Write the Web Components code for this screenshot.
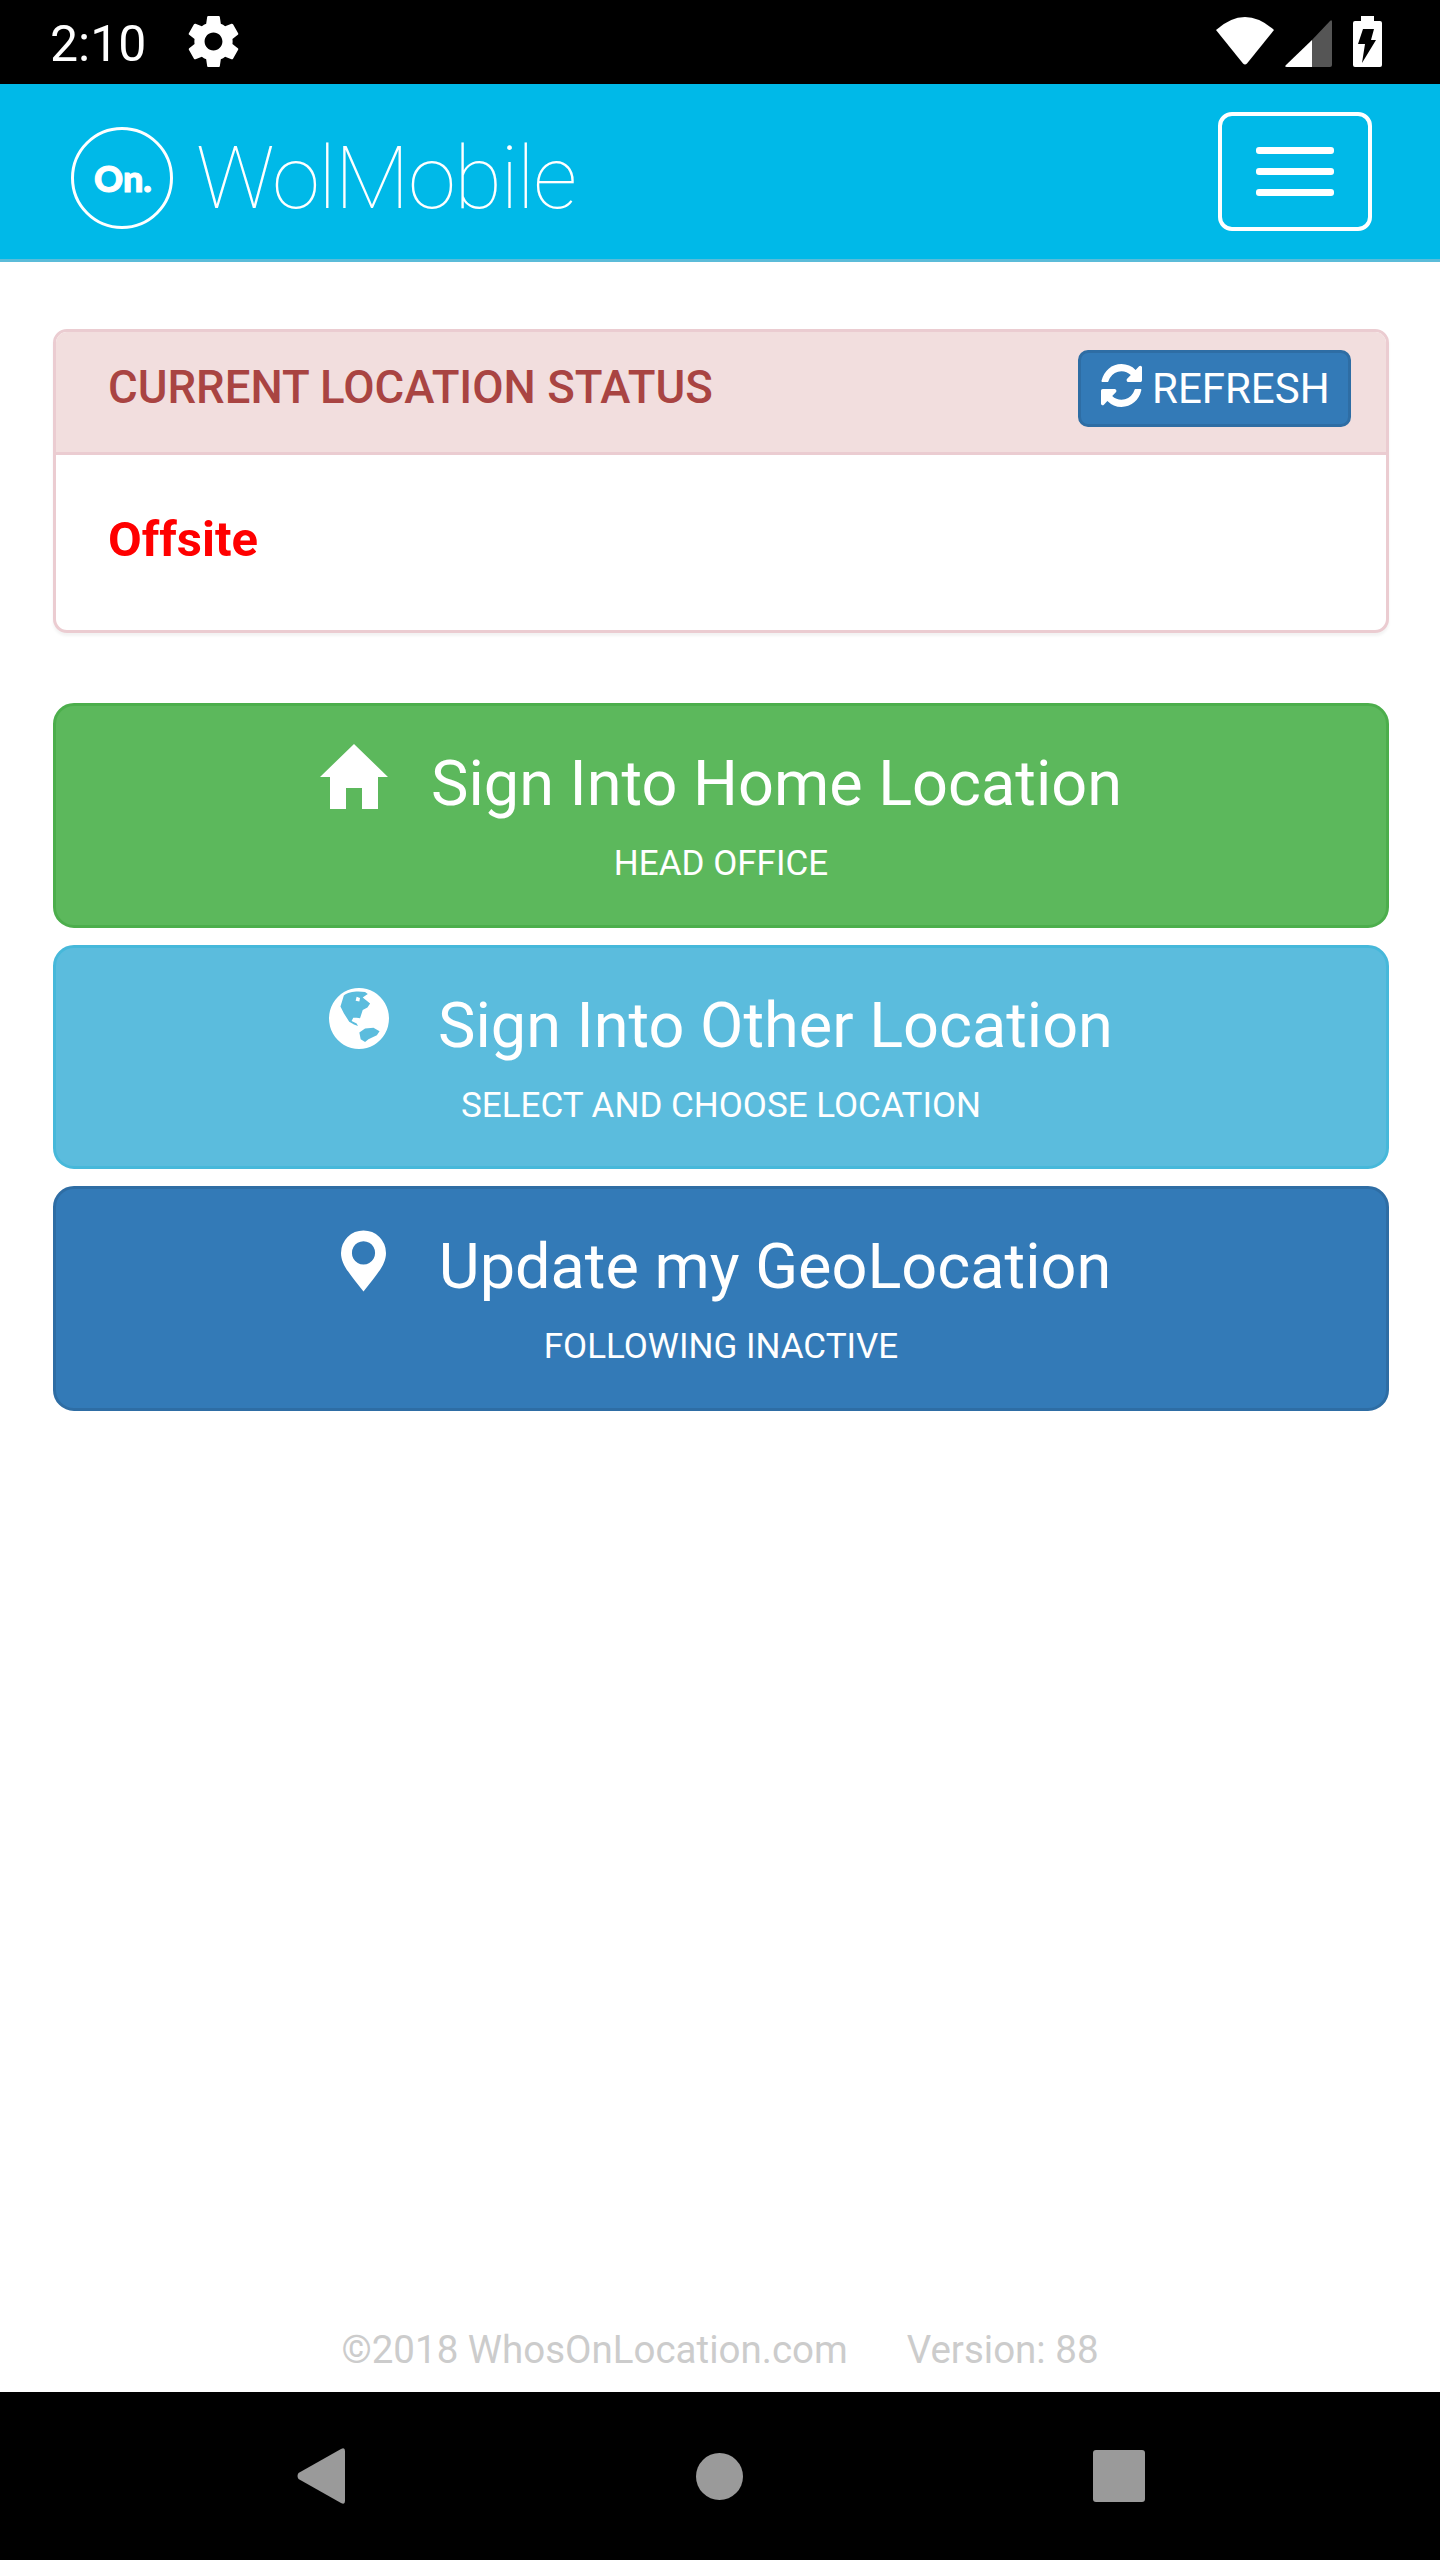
<!DOCTYPE html>
<html>
<head>
<meta charset="utf-8">
<title>WolMobile</title>
<style>
  html, body { margin: 0; padding: 0; background: #fff; }
  body {
    display: flex;
    flex-direction: column;
    height: 100vh;
    font-family: Roboto, "Liberation Sans", sans-serif;
  }
  main { display: block; padding: 67px 51px 0 53px; }
</style>
</head>
<body>
<wol-status-bar time="2:10"></wol-status-bar>
<wol-header title="WolMobile"></wol-header>
<main>
  <wol-panel heading="CURRENT LOCATION STATUS" action="REFRESH">Offsite</wol-panel>
  <wol-actions>
    <wol-action-button kind="home" title="Sign Into Home Location" sub="HEAD OFFICE"></wol-action-button>
    <wol-action-button kind="other" title="Sign Into Other Location" sub="SELECT AND CHOOSE LOCATION"></wol-action-button>
    <wol-action-button kind="geo" title="Update my GeoLocation" sub="FOLLOWING INACTIVE"></wol-action-button>
  </wol-actions>
</main>
<wol-footer copy="©2018 WhosOnLocation.com" version="Version: 88"></wol-footer>
<wol-nav-bar></wol-nav-bar>

<script>
class StatusBar extends HTMLElement {
  constructor() {
    super();
    this.attachShadow({ mode: "open" });
    this.shadowRoot.innerHTML = `
      <style>
        :host{
          display:flex;
          align-items:center;
          flex:none;
          height:84px;
          padding:0 58px 0 50px;
          background:#000;
          color:#fff;
          font:400 50px/84px Roboto, sans-serif;
        }
        #time{ width:138px; padding-top:4px; line-height:80px; }
        #gear{ margin-top:-1px; }
        #right{ margin-left:auto; display:flex; align-items:flex-start; height:84px; }
        #wifi{ margin-top:17px; }
        #signal{ margin:20px 0 0 10px; }
        #battery{ margin:16px 0 0 21px; }
        svg{ display:block; }
      </style>
      <span id="time"></span>
      <svg id="gear" width="51" height="51" viewBox="2.4 2 19.2 20" fill="#fff">
        <path d="M19.43 12.98c.04-.32.07-.64.07-.98s-.03-.66-.07-.98l2.11-1.65c.19-.15.24-.42.12-.64l-2-3.46c-.12-.22-.39-.3-.61-.22l-2.49 1c-.52-.4-1.08-.73-1.69-.98l-.38-2.65C14.46 2.18 14.25 2 14 2h-4c-.25 0-.46.18-.49.42l-.38 2.65c-.61.25-1.17.59-1.69.98l-2.49-1c-.23-.09-.49 0-.61.22l-2 3.46c-.13.22-.07.49.12.64l2.11 1.65c-.04.32-.07.65-.07.98s.03.66.07.98l-2.11 1.65c-.19.15-.24.42-.12.64l2 3.46c.12.22.39.3.61.22l2.49-1c.52.4 1.08.73 1.69.98l.38 2.65c.03.24.24.42.49.42h4c.25 0 .46-.18.49-.42l.38-2.65c.61-.25 1.17-.59 1.69-.98l2.49 1c.23.09.49 0 .61-.22l2-3.46c.12-.22.07-.49-.12-.64l-2.11-1.65zM12 15.5c-1.93 0-3.5-1.57-3.5-3.5s1.57-3.5 3.5-3.5 3.5 1.57 3.5 3.5-1.57 3.5-3.5 3.5z"/>
      </svg>
      <div id="right">
        <svg id="wifi" width="60" height="48" viewBox="0 0 60 48" fill="#fff">
          <path d="M1 13Q30-13 59 13L32 46.500Q30 48.500 28 46.500Z"/>
        </svg>
        <svg id="signal" width="47" height="47" viewBox="0 0 47 47">
          <path d="M27 20V47H2Q-1 47 1 45Z" fill="#fff"/>
          <path d="M27 20L45 1Q47-1 47 2V45Q47 47 45 47H27Z" fill="#555"/>
        </svg>
        <svg id="battery" width="29" height="51" viewBox="0 0 29 51">
          <path d="M8 0H21V5H27Q29 5 29 7V49Q29 51 27 51H2Q0 51 0 49V7Q0 5 2 5H8Z" fill="#fff"/>
          <path d="M10 13H21L18 24H23L9 47L12 28H5Z" fill="#000"/>
        </svg>
      </div>
    `;
    this.shadowRoot.getElementById("time").textContent = this.getAttribute("time");
  }
}
customElements.define("wol-status-bar", StatusBar);

class AppHeader extends HTMLElement {
  constructor() {
    super();
    this.attachShadow({ mode: "open" });
    this.shadowRoot.innerHTML = `
      <style>
        :host{
          display:flex;
          align-items:center;
          flex:none;
          box-sizing:border-box;
          height:178px;
          padding:0 68px 3px 71px;
          background:#00b9e8;
          border-bottom:3px solid #5bbcd9;
          color:#fff;
        }
        #logo{
          box-sizing:border-box;
          width:102px;
          height:102px;
          padding-left:2px;
          border:3px solid #fff;
          border-radius:50%;
          display:flex;
          align-items:center;
          justify-content:center;
          font:900 36px/1 Lato, sans-serif;
          -webkit-text-stroke:1px #fff;
          margin-top:16px;
        }
        #title{
          margin:16px 0 0 23px;
          font:100 87px/100px Roboto, sans-serif;
          letter-spacing:-1.5px;
          white-space:nowrap;
        }
        #toggle{
          box-sizing:border-box;
          margin-left:auto;
          width:154px;
          height:119px;
          border:4px solid #fff;
          border-radius:14px;
          display:flex;
          flex-direction:column;
          justify-content:center;
          align-items:center;
          gap:14px;
          margin-top:3px;
        }
        #toggle i{
          display:block;
          width:78px;
          height:7px;
          border-radius:3px;
          background:#fff;
        }
      </style>
      <div id="logo">On.</div>
      <div id="title"></div>
      <div id="toggle"><i></i><i></i><i></i></div>
    `;
    this.shadowRoot.getElementById("title").textContent = this.getAttribute("title");
  }
}
customElements.define("wol-header", AppHeader);

class Panel extends HTMLElement {
  constructor() {
    super();
    this.attachShadow({ mode: "open" });
    this.shadowRoot.innerHTML = `
      <style>
        :host{
          display:block;
          box-sizing:border-box;
          width:1336px;
          background:#fff;
          border:3px solid #ebccd1;
          border-radius:14px;
          box-shadow:0 3px 3px rgba(0,0,0,.05);
          overflow:hidden;
        }
        header{
          display:flex;
          align-items:flex-start;
          justify-content:space-between;
          height:123px;
          box-sizing:border-box;
          padding:18px 35px 0 52px;
          background:#f2dede;
          border-bottom:3px solid #ebccd1;
          color:#a94442;
          font:500 45.500px/75px Roboto, sans-serif;
        }
        button{
          box-sizing:border-box;
          display:flex;
          align-items:center;
          gap:10px;
          width:273px;
          height:77px;
          padding:0 0 0 20px;
          background:#337ab7;
          border:3px solid #2e6da4;
          border-radius:10px;
          color:#fff;
          font:400 42px/1 Roboto, sans-serif;
        }
        button svg{ display:block; flex:none; margin-top:-6px; }
        #body{
          padding:55px 52px 60px;
          color:#f00;
          font:700 49px/60px Roboto, sans-serif;
        }
      </style>
      <header>
        <span id="heading"></span>
        <button>
          <svg width="41" height="43" viewBox="0 0 1536 1536" preserveAspectRatio="none" fill="#fff">
            <path d="M1511 928q0 5-1 7-64 268-268 434.500t-478 166.500q-146 0-282.500-55t-243.500-157l-129 129q-19 19-45 19t-45-19-19-45v-448q0-26 19-45t45-19h448q26 0 45 19t19 45-19 45l-137 137q71 66 161 102t187 36q134 0 250-65t186-179q11-17 53-117 8-23 30-23h192q13 0 22.500 9.500t9.500 22.500zm25-800v448q0 26-19 45t-45 19h-448q-26 0-45-19t-19-45 19-45l138-138q-148-137-349-137-134 0-250 65t-186 179q-11 17-53 117-8 23-30 23h-199q-13 0-22.500-9.500t-9.500-22.500v-7q65-268 270-434.500t480-166.500q146 0 284 55.500t245 156.500l130-129q19-19 45-19t45 19 19 45z"/>
          </svg>
          <span id="action"></span>
        </button>
      </header>
      <div id="body"><slot></slot></div>
    `;
    this.shadowRoot.getElementById("heading").textContent = this.getAttribute("heading");
    this.shadowRoot.getElementById("action").textContent = this.getAttribute("action");
  }
}
customElements.define("wol-panel", Panel);

class Actions extends HTMLElement {
  constructor() {
    super();
    this.attachShadow({ mode: "open" });
    this.shadowRoot.innerHTML = `
      <style>
        :host{
          display:flex;
          flex-direction:column;
          gap:17px;
          width:1336px;
          margin-top:70px;
        }
      </style>
      <slot></slot>
    `;
  }
}
customElements.define("wol-actions", Actions);

const ACTION_ICONS = {
  home: `<svg width="68" height="66" viewBox="0 0 68 66" fill="#fff" style="margin-top:-4px">
    <path d="M34 0L68 33H58V65H42V44H26V65H10V33H0Z"/>
  </svg>`,
  other: `<svg width="60" height="61" viewBox="18 20 178 181" fill="#fff" style="margin-top:-2px" fill-rule="evenodd">
    <path d="M107 20a89 90.500 0 1 0 .01 0zM62 42C75 30 105 28 125 32L133 38L118 48L140 66L132 78L118 85L110 110L100 108L90 108L85 118L100 125L104 133L92 128L78 120L62 95L52 75Z"/>
    <path d="M100 46L110 50L108 60L97 58Z"/>
    <path d="M108 152L125 140L150 138L168 148L160 160L135 172L125 180L112 172Z" fill="#5bbcdd"/>
  </svg>`,
  geo: `<svg width="45" height="62" viewBox="185 150 136 185" fill="#fff" style="margin-top:-1px" fill-rule="evenodd">
    <path d="M253 335C215 285 185 255 185 218A68 68 0 0 1 321 218C321 255 291 285 253 335ZM253 183a35 35 0 1 0 .01 0Z"/>
  </svg>`
};

class ActionButton extends HTMLElement {
  constructor() {
    super();
    this.attachShadow({ mode: "open" });
    this.shadowRoot.innerHTML = `
      <style>
        :host{
          display:block;
          box-sizing:border-box;
          height:224.500px;
          padding:42px 0;
          border:3px solid #4cae4c;
          border-radius:21px;
          background:#5cb85c;
          color:#fff;
          text-align:center;
        }
        :host([kind="other"]){ background:#5bbcdd; border-color:#46b8da; }
        :host([kind="geo"]){ background:#337ab7; border-color:#2e6da4; }
        #row{
          display:flex;
          justify-content:center;
          align-items:flex-start;
          gap:43px;
        }
        :host([kind="other"]) #row{ gap:49px; }
        :host([kind="geo"]) #row{ gap:53px; padding-left:10px; }
        svg{ display:block; flex:none; }
        #title{ font:400 63px/72px Roboto, sans-serif; white-space:nowrap; }
        #sub{ margin-top:24px; font:400 35px/40px Roboto, sans-serif; }
      </style>
      <div id="row">
        ${ACTION_ICONS[this.getAttribute("kind")]}
        <span id="title"></span>
      </div>
      <div id="sub"></div>
    `;
    this.shadowRoot.getElementById("title").textContent = this.getAttribute("title");
    this.shadowRoot.getElementById("sub").textContent = this.getAttribute("sub");
  }
}
customElements.define("wol-action-button", ActionButton);

class AppFooter extends HTMLElement {
  constructor() {
    super();
    this.attachShadow({ mode: "open" });
    this.shadowRoot.innerHTML = `
      <style>
        :host{
          display:flex;
          justify-content:center;
          gap:59px;
          flex:none;
          margin-top:auto;
          padding-bottom:17px;
          color:#ccc;
          font:400 38.500px/50px Roboto, sans-serif;
        }
      </style>
      <span id="copy"></span>
      <span id="version"></span>
    `;
    this.shadowRoot.getElementById("copy").textContent = this.getAttribute("copy");
    this.shadowRoot.getElementById("version").textContent = this.getAttribute("version");
  }
}
customElements.define("wol-footer", AppFooter);

class NavBar extends HTMLElement {
  constructor() {
    super();
    this.attachShadow({ mode: "open" });
    this.shadowRoot.innerHTML = `
      <style>
        :host{
          display:grid;
          grid-template-columns:repeat(3, 1fr);
          justify-items:center;
          align-items:center;
          flex:none;
          height:168px;
          padding:0 122px;
          background:#000;
        }
        svg{ display:block; }
      </style>
      <svg width="48" height="56" viewBox="0 0 48 56" fill="#9a9a9a">
        <path d="M1.500 25L44 1Q48-1 48 3V53Q48 57 44 55L1.500 31Q-.5 28 1.500 25Z"/>
      </svg>
      <svg width="47" height="47" viewBox="0 0 47 47" fill="#9a9a9a"><circle cx="23.500" cy="23.500" r="23.500"/></svg>
      <svg width="52" height="52" viewBox="0 0 52 52" fill="#9a9a9a"><rect width="52" height="52" rx="3"/></svg>
    `;
  }
}
customElements.define("wol-nav-bar", NavBar);
</script>
</body>
</html>
